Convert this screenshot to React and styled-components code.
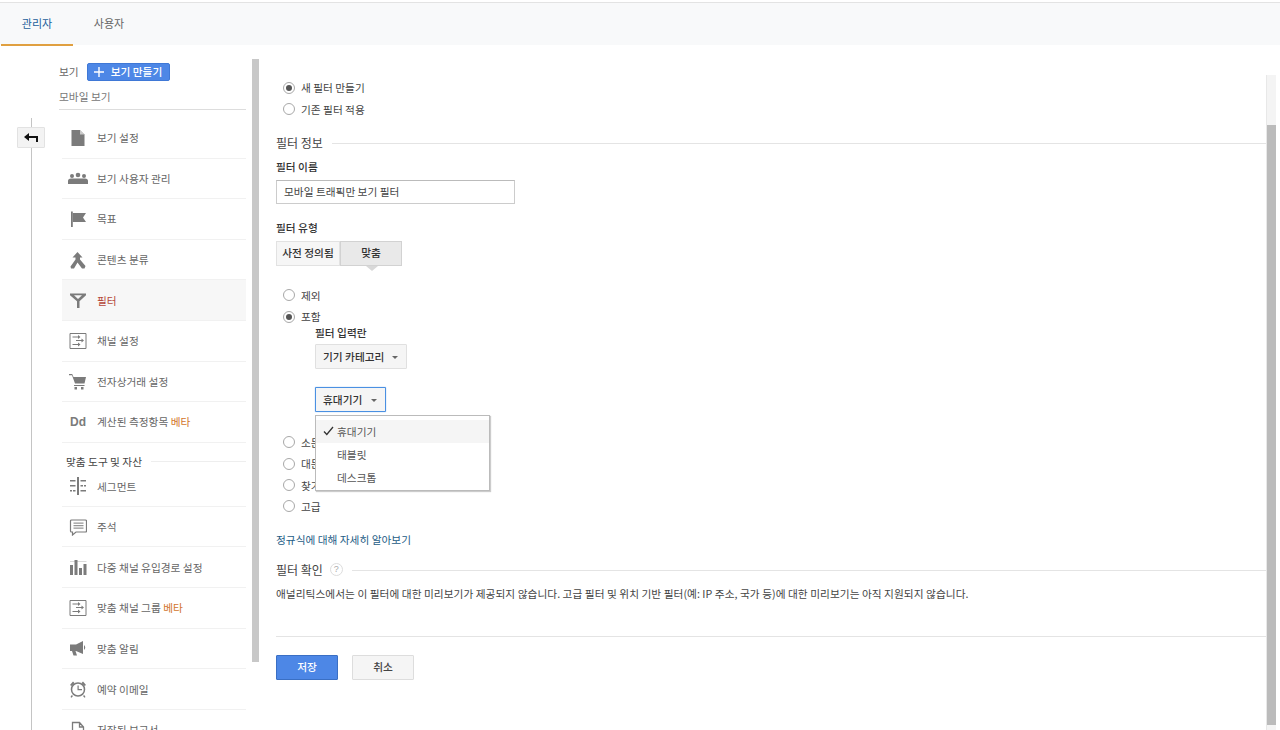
import React from 'react'
import styled, { createGlobalStyle } from 'styled-components'

const GlobalStyle = createGlobalStyle`
  html, body {
    margin: 0;
    padding: 0;
    height: 730px;
    overflow: hidden;
    background: #fff;
    font-family: "Noto Sans CJK KR", "Noto Sans", sans-serif;
    font-size: 10.7px;
    color: #444;
  }
  * { box-sizing: border-box; }
`

const Page = styled.div`
  width: 1280px;
  height: 730px;
  overflow: hidden;
  padding-top: 2px;
`

const TabBar = styled.div`
  display: flex;
  height: 43px;
  padding-left: 1px;
  background: #f8f9fa;
  border-top: 1px solid #e3e3e3;
`

const Tab = styled.div`
  width: 72px;
  height: 43px;
  line-height: 40px;
  text-align: center;
  font-size: 11px;
  color: ${p => (p.$active ? '#1c5f9b' : '#666')};
  border-bottom: 2px solid ${p => (p.$active ? '#e0a040' : 'transparent')};
`

const Body = styled.div`
  display: flex;
  height: 685px;
`

const Rail = styled.div`
  width: 59px;
  flex: none;
  padding: 73px 0 0 17px;
`

const RailLine = styled.div`
  position: relative;
  width: 1px;
  height: 620px;
  margin-left: 14px;
  background: #c4c4c4;
`

const BackButton = styled.div`
  position: absolute;
  left: -14px;
  top: 9px;
  width: 28px;
  height: 21px;
  display: flex;
  align-items: center;
  justify-content: center;
  background: #f3f3f3;
  border: 1px solid #e2e2e2;
  border-radius: 1px;
`

const Sidebar = styled.div`
  width: 187px;
  flex: none;
  padding-top: 17px;
`

const ViewRow = styled.div`
  display: flex;
  align-items: center;
  gap: 8px;
  height: 19px;
  color: #666;
`

const CreateButton = styled.div`
  display: flex;
  align-items: center;
  gap: 7px;
  width: 83px;
  height: 18px;
  padding-left: 6px;
  background: #4d87e6;
  border: 1px solid #3f78d6;
  border-radius: 2px;
  color: #fff;
  font-weight: 500;
`

const ViewName = styled.div`
  height: 25px;
  line-height: 24px;
  margin-top: 4px;
  color: #777;
  border-bottom: 1px solid #ddd;
`

const NavList = styled.div`
  padding-left: 3px;
  margin-top: 8px;
`

const NavItem = styled.div`
  display: flex;
  align-items: center;
  height: 40.6px;
  color: #666;
  background: ${p => (p.$active ? '#f7f7f7' : 'transparent')};
  border-bottom: 1px solid #f1f1f1;
`

const NavIcon = styled.div`
  width: 35px;
  flex: none;
  display: flex;
  justify-content: center;
  padding-right: 3px;
  color: #7b7b7b;
  font: bold 12px "Liberation Sans", sans-serif;
`

const NavLabel = styled.span`
  color: ${p => (p.$active ? '#b5483a' : '#666')};
`

const Beta = styled.span`
  color: #d2752c;
`

const NavHeading = styled.div`
  display: flex;
  align-items: center;
  gap: 9px;
  height: 23.5px;
  padding: 14px 0 0 4px;
  color: #444;
  &::after {
    content: '';
    flex: 1;
    height: 1px;
    background: #eee;
  }
`

const SideScroll = styled.div`
  width: 7px;
  height: 603px;
  margin: 14px 0 0 6px;
  flex: none;
  background: #c8c8c8;
`

const Main = styled.div`
  width: 990px;
  flex: none;
  margin-left: 17px;
  padding-top: 32px;
`

const RadioRow = styled.div`
  display: flex;
  align-items: center;
  gap: 6px;
  height: 21.4px;
  padding-left: 7px;
  color: #444;
`

const RadioDot = styled.span`
  width: 12px;
  height: 12px;
  flex: none;
  border-radius: 50%;
  border: 1px solid #a8a8a8;
  background: #fff;
  display: flex;
  align-items: center;
  justify-content: center;
  &::after {
    content: '';
    width: 6px;
    height: 6px;
    border-radius: 50%;
    background: ${p => (p.$on ? '#555' : 'transparent')};
  }
`

const SectionHead = styled.div`
  display: flex;
  align-items: center;
  gap: 9px;
  height: 18px;
  font-size: 12px;
  color: #444;
  margin-top: ${p => p.$top}px;
  &::after {
    content: '';
    flex: 1;
    height: 1px;
    margin-top: 2px;
    background: #e4e4e4;
  }
`

const HelpIcon = styled.span`
  width: 13px;
  height: 13px;
  border-radius: 50%;
  border: 1px solid #ddd;
  color: #aaa;
  font: 9px/11px "Liberation Sans", sans-serif;
  text-align: center;
  flex: none;
  margin-left: -2px;
`

const FieldLabel = styled.div`
  font-weight: 500;
  color: #333;
  height: 16px;
  line-height: 16px;
  margin-top: ${p => p.$top || 0}px;
`

const TextBox = styled.div`
  width: 239px;
  height: 24px;
  margin-top: 5px;
  padding-left: 7px;
  line-height: 21px;
  color: #444;
  border: 1px solid #ccc;
  border-top-color: #bbb;
`

const Segments = styled.div`
  display: flex;
  margin-top: 5px;
`

const Segment = styled.div`
  position: relative;
  width: ${p => p.$w}px;
  height: 25px;
  line-height: 22px;
  text-align: center;
  color: #333;
  font-weight: 500;
  background: ${p => (p.$on ? '#e9e9e9' : '#f6f6f6')};
  border: 1px solid ${p => (p.$on ? '#d2d2d2' : '#e2e2e2')};
  &::after {
    display: ${p => (p.$on ? 'block' : 'none')};
    content: '';
    position: absolute;
    left: 25px;
    top: 24px;
    border: 6px solid transparent;
    border-top: 5px solid #d8d8d8;
  }
`

const FilterOptions = styled.div`
  margin-top: 19px;
`

const Nested = styled.div`
  position: relative;
  padding-left: 39px;
  margin-top: -3px;
  height: 107px;
`

const Select = styled.div`
  display: flex;
  align-items: center;
  justify-content: space-between;
  width: ${p => p.$w}px;
  height: 25px;
  margin-top: ${p => p.$top}px;
  padding: 0 8px 0 7px;
  color: #333;
  font-weight: 500;
  background: #f5f5f5;
  border: 1px solid ${p => (p.$focus ? '#4a90e2' : '#e0e0e0')};
  box-shadow: ${p => (p.$focus ? '0 0 1px #4a90e2' : 'none')};
  border-radius: 1px;
  &::after {
    content: '';
    margin-top: 2px;
    border: 3px solid transparent;
    border-top: 3px solid #666;
    border-bottom: 0;
  }
`

const Menu = styled.div`
  position: absolute;
  left: 39px;
  top: 90px;
  width: 175px;
  height: 76px;
  z-index: 2;
  padding-top: 4px;
  background: #fff;
  border: 1px solid #bbb;
  box-shadow: 1px 1px 1px #ccc;
`

const MenuItem = styled.div`
  display: flex;
  align-items: center;
  height: ${p => (p.$on ? 23 : 23.5)}px;
  padding-left: 7px;
  color: #555;
  background: ${p => (p.$on ? '#f5f5f5' : 'transparent')};
`

const Check = styled.span`
  width: 14px;
  flex: none;
  display: flex;
`

const HelpLink = styled.div`
  margin-top: 13px;
  height: 20px;
  line-height: 20px;
  color: #1d5c85;
`

const Para = styled.div`
  height: 20px;
  line-height: 20px;
  margin-top: 6px;
  letter-spacing: 0.04px;
  color: #444;
`

const Rule = styled.div`
  height: 1px;
  margin-top: 32px;
  background: #e4e4e4;
`

const Actions = styled.div`
  display: flex;
  gap: 14px;
  margin-top: 18px;
`

const Button = styled.div`
  width: 62px;
  height: 25px;
  line-height: 22px;
  text-align: center;
  font-weight: 500;
  border-radius: 1px;
  color: ${p => (p.$primary ? '#fff' : '#444')};
  background: ${p => (p.$primary ? '#4d87e6' : '#f5f5f5')};
  border: 1px solid ${p => (p.$primary ? '#3a6fc4' : '#ddd')};
`

const Scroll = styled.div`
  width: 10px;
  flex: none;
  margin-top: 30px;
  background: #f4f4f4;
  border-left: 1px solid #e8e8e8;
`

const ScrollThumb = styled.div`
  height: 600px;
  margin-top: 50px;
  background: #bbb;
`

const Svg = ({ children, w = 18, h = 18 }) => (
  <svg width={w} height={h} viewBox={`0 0 ${w} ${h}`} fill="currentColor">{children}</svg>
)

const DocIcon = () => <Svg><path d="M2.500 1H11l4.500 4.500V17h-13z" /><path d="M11 1v4.500h4.500z" fill="#fff" opacity=".6" /></Svg>
const PeopleIcon = () => (
  <Svg w={20}>
    <circle cx="4" cy="7" r="2" /><circle cx="10" cy="6" r="2.300" /><circle cx="16" cy="7" r="2" />
    <path d="M0 15v-3q0-2.500 3-2.500h14q3 0 3 2.500v3z" />
  </Svg>
)
const FlagIcon = () => <Svg><path d="M2 1.500h1.800V17H2z" /><path d="M3.800 3H17l-3 4.500L17 12H3.800z" /></Svg>
const MergeIcon = () => (
  <Svg>
    <path d="M8.500 1 13.500 6.500H11v2L16.500 15l-1 2.500H13L8.500 11.500 5 17.500H2L1.500 15.500 6.500 8.500V6.500H3.500z" />
  </Svg>
)
const FunnelIcon = () => (
  <Svg>
    <path d="M1 2.500h16v1.800l-6.500 6V17h-2.500v-6.700L1 4.300zM5 4.300l4 3.600 4-3.600z" fillRule="evenodd" />
  </Svg>
)
const ChannelIcon = () => (
  <Svg>
    <path d="M1 1.500h16v15H1z" fill="none" stroke="currentColor" />
    <path d="M3.500 4.500H9V3l2.500 2L9 7V5.500H3.500zM7 8h5.500V6.500l2.500 2-2.500 2V9H7zM3.500 12H9v-1.500l2.500 2-2.500 2V13H3.500z" />
  </Svg>
)
const CartIcon = () => (
  <Svg>
    <path d="M0 2h3.200L4.500 5H17l-1.500 6.500H6L3 3.300H0z" />
    <rect x="5" y="13" width="10.500" height="1" />
    <rect x="5.500" y="15" width="2.500" height="2.500" /><rect x="12" y="15" width="2.500" height="2.500" />
  </Svg>
)
const SegmentIcon = () => (
  <Svg>
    <path d="M8 0h2v18H8zM1 3h5.500v1.600H1zM1 8h5.500v1.600H1zM1 13h2v1.600H1zM4 13h2.500v1.600H4zM11.500 3h5.500v1.600h-5.500zM11.500 8h2.500v1.600h-2.500zM15 8h2v1.600h-2zM11.500 13h5.500v1.600h-5.500z" />
  </Svg>
)
const CommentIcon = () => (
  <Svg>
    <path d="M2.500 2h14a1 1 0 0 1 1 1v10a1 1 0 0 1-1 1H7l-3.500 3v-3H2.500a1 1 0 0 1-1-1V3a1 1 0 0 1 1-1z" fill="none" stroke="currentColor" strokeWidth="1.200" />
    <path d="M4.500 4.500h10v1.200h-10zM4.500 7h10v1.200h-10zM4.500 9.500h10v1.200h-10z" opacity=".8" />
  </Svg>
)
const BarsIcon = () => (
  <Svg>
    <path d="M1 7h3v10H1zM5.500 2h3v15h-3zM10 10h3v7h-3zM14.500 6h3v11h-3z" />
    <path d="M1 3h16.500v.6H1z" opacity=".45" />
  </Svg>
)
const MegaphoneIcon = () => (
  <Svg>
    <path d="M1 5.500h6L14 2v13l-7-3H6.500L8 16.500H4.500L3 12H1z" />
    <path d="M15 6q2.500 2.500 0 5z" />
  </Svg>
)
const ClockIcon = () => (
  <Svg>
    <circle cx="9" cy="9.500" r="6.500" fill="none" stroke="currentColor" strokeWidth="1.500" />
    <path d="M8.500 5.500h1.200V9H13v1.200H8.500zM1 5l3-3.500 1.500 1.500L2.500 6zM17 5l-3-3.500-1.500 1.500L15.500 6zM2.800 15l1.200 1-1.500 1.800-1-.8zM15.200 15 14 16l1.500 1.800 1-.8z" />
  </Svg>
)
const ReportIcon = () => (
  <Svg><path d="M3.500 1.500h7l4 4.500v11h-11zM10.500 1.500V6h4" fill="none" stroke="currentColor" strokeWidth="1.300" /></Svg>
)

const navTop = [
  { icon: <DocIcon />, label: '보기 설정' },
  { icon: <PeopleIcon />, label: '보기 사용자 관리' },
  { icon: <FlagIcon />, label: '목표' },
  { icon: <MergeIcon />, label: '콘텐츠 분류' },
  { icon: <FunnelIcon />, label: '필터', active: true },
  { icon: <ChannelIcon />, label: '채널 설정' },
  { icon: <CartIcon />, label: '전자상거래 설정' },
  { icon: 'Dd', label: '계산된 측정항목', beta: true },
]

const navTools = [
  { icon: <SegmentIcon />, label: '세그먼트' },
  { icon: <CommentIcon />, label: '주석' },
  { icon: <BarsIcon />, label: '다중 채널 유입경로 설정' },
  { icon: <ChannelIcon />, label: '맞춤 채널 그룹', beta: true },
  { icon: <MegaphoneIcon />, label: '맞춤 알림' },
  { icon: <ClockIcon />, label: '예약 이메일' },
  { icon: <ReportIcon />, label: '저장된 보고서' },
]

const renderNav = item => (
  <NavItem key={item.label} $active={item.active}>
    <NavIcon>{item.icon}</NavIcon>
    <NavLabel $active={item.active}>
      {item.label}
      {item.beta && <Beta> 베타</Beta>}
    </NavLabel>
  </NavItem>
)

const Radio = ({ on, children }) => (
  <RadioRow>
    <RadioDot $on={on} />
    {children}
  </RadioRow>
)

export default function App() {
  return (
    <Page>
      <GlobalStyle />
      <TabBar>
        <Tab $active>관리자</Tab>
        <Tab>사용자</Tab>
      </TabBar>
      <Body>
        <Rail>
          <RailLine>
            <BackButton>
              <svg width="14" height="10" viewBox="0 0 14 10" fill="#111">
                <path d="M0 4 5 0v3h9v6h-2V5H5v3z" />
              </svg>
            </BackButton>
          </RailLine>
        </Rail>
        <Sidebar>
          <ViewRow>
            보기
            <CreateButton>
              <svg width="10" height="10" viewBox="0 0 10 10" fill="#fff"><path d="M4.300 0h1.400v4.300H10v1.400H5.700V10H4.300V5.700H0V4.300h4.300z" /></svg>
              보기 만들기
            </CreateButton>
          </ViewRow>
          <ViewName>모바일 보기</ViewName>
          <NavList>
            {navTop.map(renderNav)}
            <NavHeading>맞춤 도구 및 자산</NavHeading>
            {navTools.map(renderNav)}
          </NavList>
        </Sidebar>
        <SideScroll />
        <Main>
          <Radio on>새 필터 만들기</Radio>
          <Radio>기존 필터 적용</Radio>
          <SectionHead $top={14}>필터 정보</SectionHead>
          <FieldLabel $top={7}>필터 이름</FieldLabel>
          <TextBox>모바일 트래픽만 보기 필터</TextBox>
          <FieldLabel $top={16}>필터 유형</FieldLabel>
          <Segments>
            <Segment $w={64}>사전 정의됨</Segment>
            <Segment $w={62} $on>맞춤</Segment>
          </Segments>
          <FilterOptions>
            <Radio>제외</Radio>
            <Radio on>포함</Radio>
            <Nested>
              <FieldLabel>필터 입력란</FieldLabel>
              <Select $w={92} $top={3}>기기 카테고리</Select>
              <Select $w={71} $top={18} $focus>휴대기기</Select>
              <Menu>
                <MenuItem $on>
                  <Check>
                    <svg width="11" height="10" viewBox="0 0 11 10" fill="none" stroke="#333" strokeWidth="1.300"><path d="M1 5.500 3.800 8.500 10 1" /></svg>
                  </Check>
                  휴대기기
                </MenuItem>
                <MenuItem><Check />태블릿</MenuItem>
                <MenuItem><Check />데스크톱</MenuItem>
              </Menu>
            </Nested>
            <Radio>소문자</Radio>
            <Radio>대문자</Radio>
            <Radio>찾기 및 바꾸기</Radio>
            <Radio>고급</Radio>
          </FilterOptions>
          <HelpLink>정규식에 대해 자세히 알아보기</HelpLink>
          <SectionHead $top={10}>필터 확인<HelpIcon>?</HelpIcon></SectionHead>
          <Para>애널리틱스에서는 이 필터에 대한 미리보기가 제공되지 않습니다. 고급 필터 및 위치 기반 필터(예: IP 주소, 국가 등)에 대한 미리보기는 아직 지원되지 않습니다.</Para>
          <Rule />
          <Actions>
            <Button $primary>저장</Button>
            <Button>취소</Button>
          </Actions>
        </Main>
        <Scroll><ScrollThumb /></Scroll>
      </Body>
    </Page>
  )
}
